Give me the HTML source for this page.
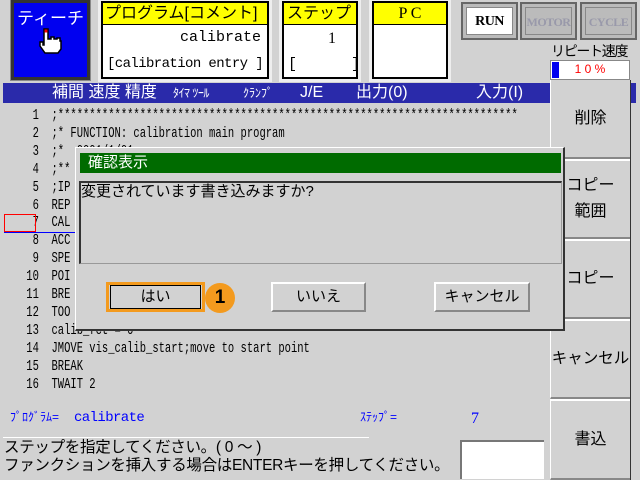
<!DOCTYPE html>
<html><head><meta charset="utf-8"><style>
*{margin:0;padding:0;box-sizing:border-box}
body{width:640px;height:480px;background:#d2d2d2;position:relative;overflow:hidden;font-family:"Liberation Sans","Noto Sans CJK JP",sans-serif;color:#000}
.a{position:absolute}
.box{position:absolute;border:2px solid #000;outline:3px solid #eee;background:#fff}
.hd{position:absolute;left:0;right:0;top:0;height:22px;background:#ffff00;border-bottom:1px solid #000;font-size:16px;line-height:22px;text-align:center}
.code{position:absolute;font-family:"Liberation Mono","Noto Sans CJK JP",monospace;font-size:15px;white-space:pre;line-height:17.9px;transform:scaleX(0.70);transform-origin:0 0}
.btn{position:absolute;background:#d2d2d2;border-top:2px solid #fff;border-left:2px solid #fff;border-right:2px solid #888;border-bottom:2px solid #888;text-align:center;font-size:15px}
.rb{position:absolute;left:550px;width:80px;background:#d2d2d2;border-top:2px solid #fff;border-left:1px solid #fff;border-bottom:2px solid #888;font-size:16px;text-align:center;display:flex;align-items:center;justify-content:center;line-height:26px;white-space:nowrap}
.mode{position:absolute;top:2px;width:57px;height:38px;background:#bbb;border:2px solid #666}
.mode div{position:absolute;left:3px;top:3px;right:3px;bottom:3px;font-family:"Liberation Serif",serif;font-weight:bold;font-size:12px;text-align:center;line-height:28px;border:1px solid #888;letter-spacing:-0.5px}
.h{position:absolute;top:0;line-height:20px}
</style></head><body>
<div class="a" style="left:11px;top:0;width:79px;height:80px;background:#0000f0;border:3px solid #333;outline:1px solid #888"></div>
<div class="a" style="left:17px;top:4px;color:#fff;font-size:17px">ティーチ</div>
<svg class="a" style="left:36px;top:27px" width="28" height="28" viewBox="0 0 28 28"><path d="M8 2h4v10h3v-2h3v2h3v-1h3v3h1v8l-3 4H9l-5-7v-4h3v3h1z" fill="#fff" stroke="#000" stroke-width="1.5"/><rect x="8.5" y="2.5" width="3" height="3" fill="#e00"/></svg>
<div class="box" style="left:101px;top:1px;width:168px;height:78px"><div class="hd" style="text-align:left;padding-left:2px">プログラム[コメント]</div>
<div class="a" style="right:6px;top:26px;font-family:'Liberation Mono',monospace;font-size:15px">calibrate</div>
<div class="a" style="left:4px;top:53px;font-family:'Liberation Mono',monospace;font-size:14px;letter-spacing:-0.6px">[calibration entry ]</div></div>
<div class="box" style="left:282px;top:1px;width:76px;height:78px"><div class="hd" style="text-align:left;padding-left:3px">ステップ</div>
<div class="a" style="right:20px;top:27px;font-family:'Liberation Serif',serif;font-size:16px">1</div>
<div class="a" style="left:4px;top:53px;font-family:'Liberation Mono',monospace;font-size:15px">[&nbsp;&nbsp;&nbsp;&nbsp;&nbsp;&nbsp;]</div></div>
<div class="box" style="left:372px;top:1px;width:76px;height:78px"><div class="hd" style="font-family:'Liberation Serif',serif">P C</div></div>
<div class="mode" style="left:461px"><div style="background:#fff;color:#000;font-size:14px">RUN</div></div>
<div class="mode" style="left:520px"><div style="color:#99a">MOTOR</div></div>
<div class="mode" style="left:580px"><div style="color:#99a">CYCLE</div></div>
<div class="a" style="left:551px;top:41px;font-size:14px;letter-spacing:-1.3px;white-space:nowrap">リピート速度</div>
<div class="a" style="left:550px;top:60px;width:80px;height:20px;background:#fff;border:1px solid #888"><div class="a" style="left:1px;top:1px;width:7px;height:16px;background:#0000f0"></div><div class="a" style="left:0;right:0;top:1px;text-align:center;color:#f00;font-size:12px">1 0 %</div></div>
<div class="a" style="left:3px;top:83px;width:547px;height:20px;background:#2a2aaa;color:#fff;font-size:16px">
<span class="h" style="left:49px">補間 速度 精度</span>
<span class="h" style="left:170px;font-size:12px;letter-spacing:-0.5px">ﾀｲﾏ ﾂｰﾙ</span>
<span class="h" style="left:240px;font-size:12px">ｸﾗﾝﾌﾟ</span>
<span class="h" style="left:297px">J/E</span>
<span class="h" style="left:353px">出力(0)</span>
<span class="h" style="left:473px">入力(I)</span>
</div>
<div class="a" style="left:631px;top:83px;width:5px;height:20px;background:#2a2aaa"></div>
<div class="a" style="left:629px;top:80px;width:2px;height:400px;background:#333"></div>
<div class="code" style="left:20px;top:107px">  1  ;*************************************************************************
  2  ;* FUNCTION: calibration main program
  3  ;*  0001/1/01
  4  ;**
  5  ;IP
  6  REP
  7  CAL
  8  ACC
  9  SPE
 10  POI
 11  BRE
 12  TOO
 13  calib_fct = 0
 14  JMOVE vis_calib_start;move to start point
 15  BREAK
 16  TWAIT 2</div>
<div class="a" style="left:4px;top:214px;width:32px;height:18px;border:1px solid #f00"></div>
<div class="a" style="left:4px;top:232px;width:72px;height:1px;background:#00f"></div>
<div class="rb" style="top:80px;height:79px;border-top:none">削除</div>
<div class="rb" style="top:159px;height:80px">コピー<br>範囲</div>
<div class="rb" style="top:239px;height:80px">コピー</div>
<div class="rb" style="top:319px;height:80px;font-size:15.5px">キャンセル</div>
<div class="rb" style="top:399px;height:81px">書込</div>
<div class="a" style="left:75px;top:147px;width:490px;height:184px;background:#d2d2d2;border-top:1px solid #fff;border-left:1px solid #fff;border-right:2px solid #333;border-bottom:2px solid #333"></div>
<div class="a" style="left:80px;top:153px;width:481px;height:20px;background:#006b00;color:#fff;font-size:15px;line-height:20px;padding-left:8px">確認表示</div>
<div class="a" style="left:79px;top:181px;width:483px;height:83px;border-top:2px solid #333;border-left:2px solid #333;border-right:1px solid #999;border-bottom:1px solid #999;font-size:15px;line-height:18px">変更されています書き込みますか?</div>
<div class="a" style="left:106px;top:282px;width:99px;height:30px;border:3px solid #f39a1e"></div>
<div class="a" style="left:110px;top:285px;width:91px;height:24px;border:1px solid #000;font-size:15px;text-align:center;line-height:22px">はい</div>
<div class="a" style="left:205px;top:283px;width:30px;height:30px;border-radius:50%;background:#f39a1e;color:#000;font-size:19px;font-weight:bold;text-align:center;line-height:30px">1</div>
<div class="btn" style="left:271px;top:282px;width:95px;height:30px;line-height:26px">いいえ</div>
<div class="btn" style="left:434px;top:282px;width:96px;height:30px;line-height:26px">キャンセル</div>
<div class="a" style="left:10px;top:408px;color:#00f;font-size:12px">ﾌﾟﾛｸﾞﾗﾑ=</div>
<div class="a" style="left:74px;top:410px;color:#00f;font-family:'Liberation Mono',monospace;font-size:14px;letter-spacing:-0.6px">calibrate</div>
<div class="a" style="left:360px;top:408px;color:#00f;font-size:12px">ｽﾃｯﾌﾟ=</div>
<div class="a" style="left:471px;top:410px;color:#00f;font-family:'Liberation Serif',serif;font-size:16px">7</div>
<div class="a" style="left:3px;top:437px;width:366px;height:1px;background:#fff"></div>
<div class="a" style="left:4px;top:439px;font-size:15.5px;line-height:18px;white-space:pre;letter-spacing:-0.3px">ステップを指定してください。( 0 ～ )
ファンクションを挿入する場合はENTERキーを押してください。</div>
<div class="a" style="left:460px;top:440px;width:84px;height:39px;background:#fff;border-top:2px solid #777;border-left:2px solid #777"></div>
</body></html>
